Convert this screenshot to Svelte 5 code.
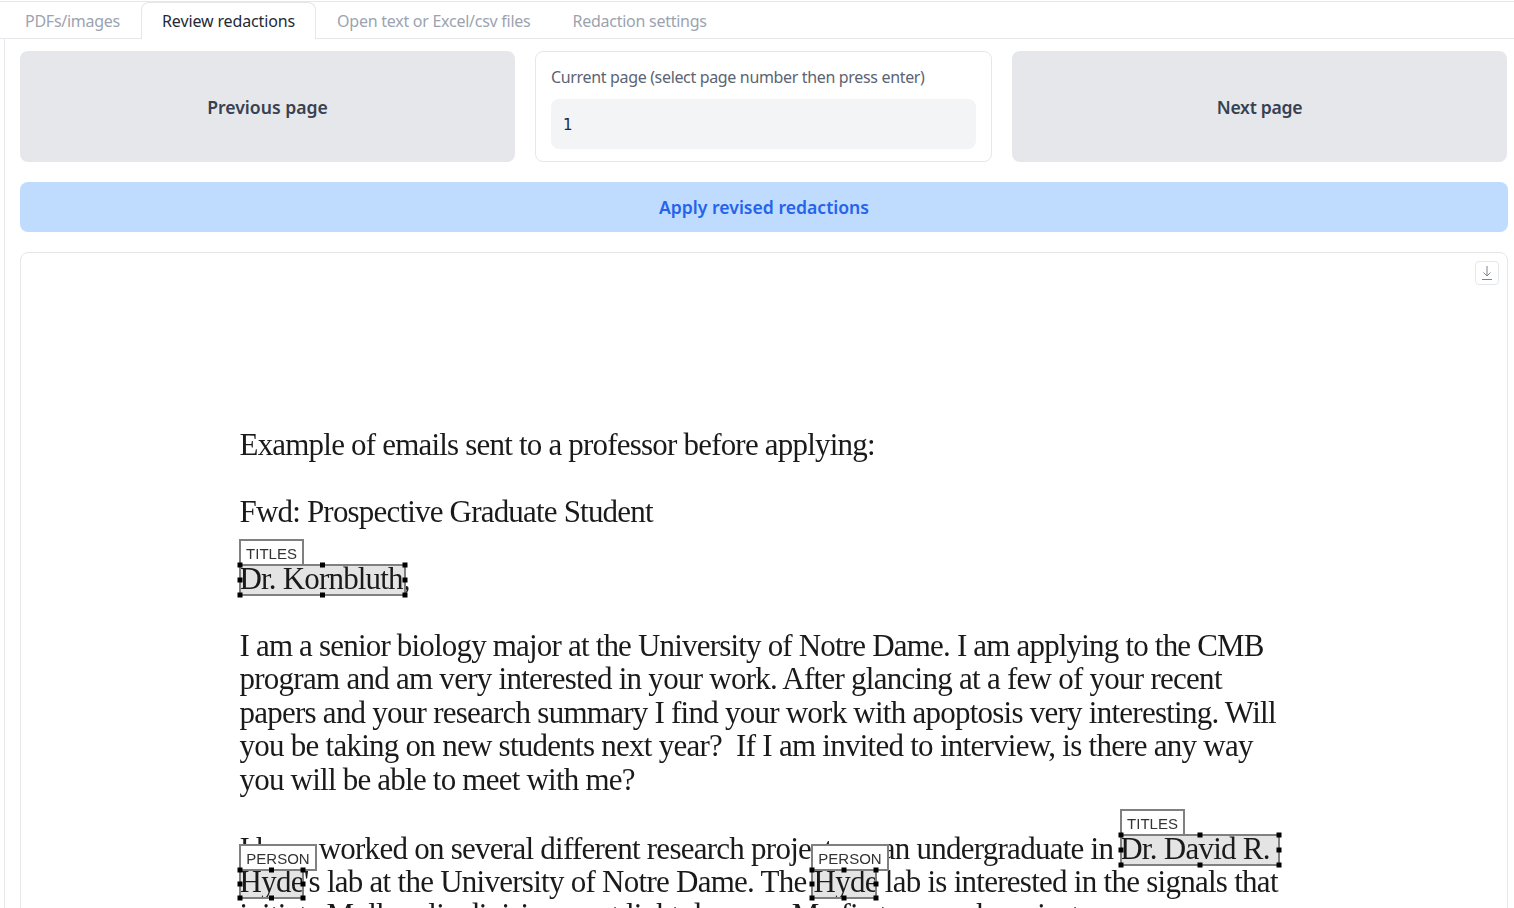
<script>
  const tabs = ["PDFs/images", "Review redactions", "Open text or Excel/csv files", "Redaction settings"];
  const active = 1;

  // lines of the scanned page: text, left edge, baseline, width
  const lines = [
    ["Example of emails sent to a professor before applying:", 240, 202, 636],
    ["Fwd: Prospective Graduate Student", 240, 269, 414],
    ["Dr. Kornbluth,", 240, 336, 171],
    ["I am a senior biology major at the University of Notre Dame. I am applying to the CMB", 240, 403, 1025],
    ["program and am very interested in your work. After glancing at a few of your recent", 240, 436, 983],
    ["papers and your research summary I find your work with apoptosis very interesting. Will", 240, 470, 1037],
    ["you be taking on new students next year?  If I am invited to interview, is there any way", 240, 503, 1014],
    ["you will be able to meet with me?", 240, 537, 396],
    ["I have worked on several different research projects as an undergraduate in Dr. David R.", 240, 606, 1031],
    ["Hyde's lab at the University of Notre Dame. The Hyde lab is interested in the signals that", 240, 639, 1039],
    ["initiate Muller glia division, sent light damage. My first research project", 240, 672, 840],
  ];

  // redaction boxes on the page, coordinates relative to the image frame
  const boxes = [
    { label: "TITLES", x: 219, y: 312, w: 165, h: 30, lw: 63 },
    { label: "PERSON", x: 219, y: 617, w: 63, h: 28, lw: 76 },
    { label: "PERSON", x: 791, y: 617, w: 64, h: 28, lw: 76 },
    { label: "TITLES", x: 1100, y: 582, w: 158, h: 30, lw: 63 },
  ];

  function handles(b) {
    const xs = [b.x, b.x + b.w / 2, b.x + b.w];
    const ys = [b.y, b.y + b.h / 2, b.y + b.h];
    const out = [];
    for (const y of ys) for (const x of xs) {
      if (x === xs[1] && y === ys[1]) continue;
      out.push([x, y]);
    }
    return out;
  }
</script>

<div class="page">
  <nav class="tabs">
    {#each tabs as tab, i}
      <button class="tab" class:active={i === active}>{tab}</button>
    {/each}
  </nav>

  <main class="panel">
    <div class="pager">
      <button class="grey">Previous page</button>
      <label class="card">
        <span>Current page (select page number then press enter)</span>
        <input type="text" value="1" />
      </label>
      <button class="grey next">Next page</button>
    </div>

    <button class="apply">Apply revised redactions</button>

    <div class="frame">
      <button class="download" aria-label="Download">
        <svg width="14" height="16" viewBox="0 0 14 16" fill="none" stroke="#7b8494" stroke-width="1">
          <path d="M7 1v10M3.500 7.500 7 11l3.500-3.500M2 14.500h10" />
        </svg>
      </button>
      <svg class="doc" width="1486" height="700" viewBox="0 0 1486 700">
        {#each boxes as b}
          <rect x={b.x} y={b.y} width={b.w} height={b.h} fill="#e4e4e4" />
        {/each}
        {#each lines as [text, x, y, w]}
          <text x={x - 21.5} {y} textLength={w} lengthAdjust="spacing" class="line">{text}</text>
        {/each}
        {#each boxes as b}
          <rect x={b.x} y={b.y} width={b.w} height={b.h} class="mark" />
          <rect x={b.x} y={b.y - 25} width={b.lw} height={25} class="tag" />
          <text x={b.x + b.lw / 2} y={b.y - 6.5} class="tagtext" text-anchor="middle">{b.label}</text>
          {#each handles(b) as [hx, hy]}
            <rect x={hx - 2.5} y={hy - 2.5} width="5" height="5" fill="#000" />
          {/each}
        {/each}
      </svg>
    </div>
  </main>
</div>

<style>
  :global(body) {
    margin: 0;
    background: #fff;
    overflow: hidden;
  }
  .page {
    height: 908px;
    overflow: hidden;
    font-family: "Noto Sans", sans-serif;
    color: #374151;
  }
  button {
    font-family: inherit;
    cursor: pointer;
  }
  .tabs {
    display: flex;
    height: 36px;
    margin-top: 1px;
    border-top: 1px solid #e5e7eb;
    border-bottom: 1px solid #e5e7eb;
    padding-left: 4px;
  }
  .tab {
    border: 1px solid transparent;
    border-bottom: none;
    background: none;
    padding: 0 20px;
    margin-bottom: -1px;
    font-size: 16px;
    letter-spacing: -0.26px;
    color: #9ca3af;
    border-radius: 8px 8px 0 0;
  }
  .tab.active {
    background: #fff;
    color: #1f2937;
    border-color: #e5e7eb;
    letter-spacing: -0.13px;
  }
  .panel {
    margin-left: 4px;
    border-left: 1px solid #e5e7eb;
    padding: 12px 6px 0 15px;
    display: flex;
    flex-direction: column;
    gap: 20px;
  }
  .pager {
    display: flex;
    gap: 20px;
    height: 111px;
    padding-right: 1px;
  }
  .grey {
    flex: 1;
    border: none;
    border-radius: 8px;
    background: #e5e7eb;
    color: #374151;
    font-size: 17.6px;
    font-weight: 600;
  }
  .next {
    letter-spacing: -0.3px;
  }
  .card {
    width: 457px;
    box-sizing: border-box;
    border: 1px solid #e5e7eb;
    border-radius: 8px;
    padding: 13px 15px 12px;
    display: flex;
    flex-direction: column;
    gap: 9px;
    font-size: 16px;
    line-height: 25px;
    letter-spacing: -0.34px;
    color: #5b6472;
  }
  .card input {
    height: 50px;
    flex: none;
    box-sizing: border-box;
    border: none;
    outline: none;
    border-radius: 8px;
    background: #f3f4f6;
    padding: 2px 12px 0;
    font: 15px "DejaVu Sans", sans-serif;
    color: #1f2937;
  }
  .apply {
    height: 50px;
    border: none;
    border-radius: 8px;
    background: #bfdbfe;
    color: #2563eb;
    font-size: 17.6px;
    font-weight: 600;
  }
  .frame {
    position: relative;
    height: 700px;
    border: 1px solid #e5e7eb;
    border-radius: 8px;
    overflow: hidden;
  }
  .download {
    position: absolute;
    top: 8px;
    right: 8px;
    width: 24px;
    height: 24px;
    padding: 0;
    display: flex;
    align-items: center;
    justify-content: center;
    background: #fff;
    border: 1px solid #e5e7eb;
    border-radius: 4px;
    z-index: 1;
  }
  .doc {
    display: block;
    filter: blur(0.5px);
  }
  .line {
    font-family: "Liberation Serif", serif;
    font-size: 31px;
    white-space: pre;
    fill: #1a1a1a;
  }
  .mark {
    fill: none;
    stroke: #808080;
    stroke-width: 2;
  }
  .tag {
    fill: #fff;
    stroke: #808080;
    stroke-width: 2;
  }
  .tagtext {
    font-family: "Liberation Sans", sans-serif;
    font-size: 15px;
    fill: #333;
  }
</style>
